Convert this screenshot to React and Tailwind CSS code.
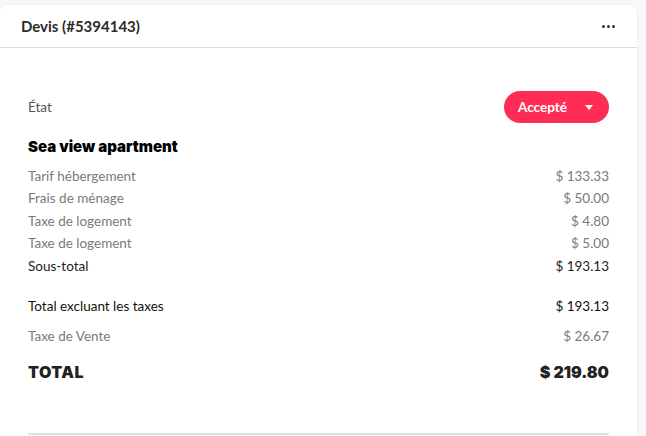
import React from "react";

const Row = ({ label, value, dark }) => (
  <div className={`flex justify-between items-center h-[22.5px] text-[13.5px] ${dark ? "text-[#222]" : "text-[#7a7a7a]"}`}>
    <span>{label}</span>
    <span>{value}</span>
  </div>
);

export default function App() {
  return (
    <div className="w-[646px] h-[436px] bg-[#f8f8f8] overflow-hidden font-['Lato',sans-serif]">
      <div className="mt-[5px] w-[637px] h-[440px] bg-white rounded-tr-[8px] rounded-tl-[8px] shadow-[0_0_4px_rgba(0,0,0,0.06)]">
        <div className="h-[43px] flex items-center justify-between pl-[21px] pr-[22px] border-b border-[#dcdcdc]">
          <span className="text-[15px] font-bold text-[#2b2b2b]">Devis (#5394143)</span>
          <span className="flex gap-[2px] items-center">
            <span className="w-[3px] h-[3px] bg-[#333] rounded-full" />
            <span className="w-[3px] h-[3px] bg-[#333] rounded-full" />
            <span className="w-[3px] h-[3px] bg-[#333] rounded-full" />
          </span>
        </div>
        <div className="px-[28px] pt-[43px]">
          <div className="flex items-center justify-between">
            <span className="text-[13.5px] text-[#555]">État</span>
            <button className="h-[32px] w-[105px] rounded-full bg-[#ff2d55] text-white text-[13.5px] font-bold flex items-center pl-[14px] pr-[16px] justify-between">
              <span>Accepté</span>
              <svg width="8" height="5" viewBox="0 0 8 5"><path d="M0 0h8L4 5z" fill="white" /></svg>
            </button>
          </div>
          <div className="mt-[13px] text-[15px] font-black text-black font-['Inter',sans-serif]">Sea view apartment</div>
          <div className="mt-[6px]">
            <Row label="Tarif hébergement" value="$ 133.33" />
            <Row label="Frais de ménage" value="$ 50.00" />
            <Row label="Taxe de logement" value="$ 4.80" />
            <Row label="Taxe de logement" value="$ 5.00" />
            <Row label="Sous-total" value="$ 193.13" dark />
          </div>
          <div className="mt-[18px]">
            <div className="flex justify-between items-center h-[22px] text-[13.5px] text-[#111]">
              <span>Total excluant les taxes</span>
              <span>$ 193.13</span>
            </div>
            <div className="mt-[8px] flex justify-between items-center h-[22px] text-[13.5px] text-[#7a7a7a]">
              <span>Taxe de Vente</span>
              <span>$ 26.67</span>
            </div>
            <div className="mt-[14px] flex justify-between items-center h-[22px] font-['Inter',sans-serif] font-black text-[#222]">
              <span className="text-[16px] tracking-[0.5px]">TOTAL</span>
              <span className="text-[16px]">$ 219.80</span>
            </div>
          </div>
          <div className="mt-[50px] border-t-2 border-[#e0e0e0]" />
        </div>
      </div>
    </div>
  );
}
